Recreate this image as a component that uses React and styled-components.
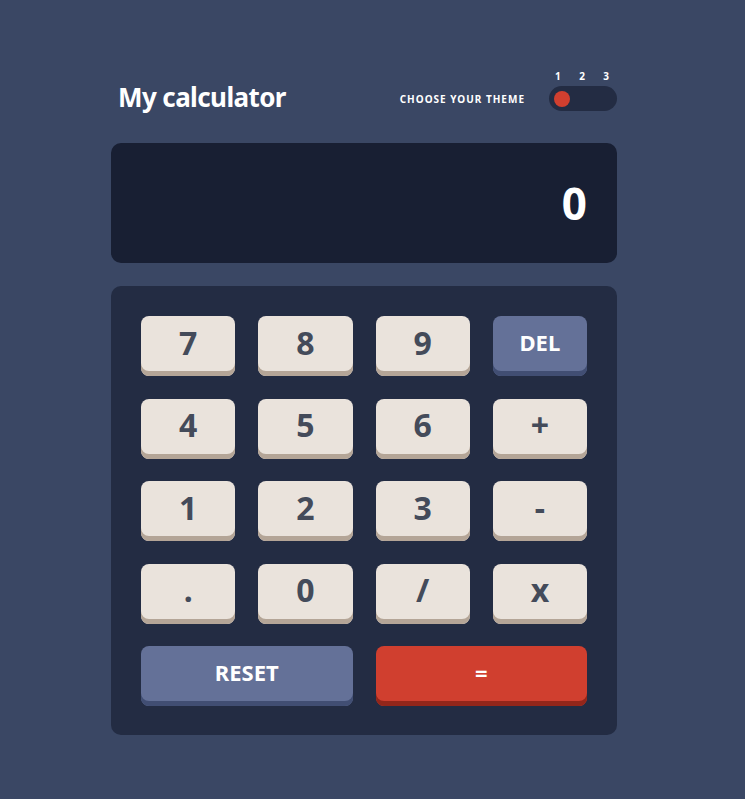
import styled, { createGlobalStyle } from "styled-components";

const GlobalStyle = createGlobalStyle`
  * { box-sizing: border-box; }
  html, body { margin: 0; padding: 0; }
  body {
    background: #3a4764;
    font-family: "Noto Sans", "Liberation Sans", sans-serif;
    min-height: 799px;
  }
`;

const Page = styled.div`
  display: flex;
  justify-content: center;
  padding: 70px 17px 0 0;
`;

const Calculator = styled.main`
  width: 506px;
  display: flex;
  flex-direction: column;
`;

const Header = styled.header`
  display: flex;
  align-items: flex-end;
  justify-content: space-between;
  height: 41px;
`;

const Title = styled.h1`
  margin: 0 0 0 7px;
  color: #fff;
  font-size: 26px;
  font-weight: 700;
  letter-spacing: -0.6px;
  line-height: 1;
  padding-bottom: 1px;
`;

const ThemeBox = styled.div`
  display: flex;
  align-items: flex-end;
  gap: 24px;
`;

const ThemeLabel = styled.span`
  color: #fff;
  font-size: 10px;
  font-weight: 700;
  letter-spacing: 1px;
  padding-bottom: 5px;
`;

const Switch = styled.div`
  display: flex;
  flex-direction: column;
  gap: 5px;
  width: 68px;
`;

const Numbers = styled.div`
  display: flex;
  justify-content: space-between;
  padding: 0 8px 0 6px;
  color: #fff;
  font-size: 10px;
  font-weight: 700;
  line-height: 1;
`;

const Track = styled.div`
  height: 25px;
  border-radius: 13px;
  background: #232c43;
  display: flex;
  align-items: center;
  padding: 0 5px;
`;

const Knob = styled.span`
  width: 16px;
  height: 16px;
  border-radius: 50%;
  background: #d03f2f;
`;

const Screen = styled.div`
  margin-top: 32px;
  height: 120px;
  border-radius: 10px;
  background: #181f33;
  display: flex;
  align-items: center;
  justify-content: flex-end;
  padding: 0 30px;
  color: #fff;
  font-size: 44px;
  font-weight: 700;
`;

const Keypad = styled.div`
  margin-top: 23px;
  border-radius: 10px;
  background: #232c43;
  padding: 30px 30px 29px;
  display: grid;
  grid-template-columns: repeat(4, 1fr);
  grid-auto-rows: 60px;
  gap: 22.5px 23px;
`;

const palette = {
  num: { bg: "#eae3dc", shadow: "#b4a597", color: "#444b5a", size: "32px" },
  del: { bg: "#647198", shadow: "#414e73", color: "#fff", size: "22px" },
  eq: { bg: "#d03f2f", shadow: "#93261a", color: "#fff", size: "22px" },
};

const Key = styled.button`
  border: none;
  border-radius: 8px;
  background: ${(p) => palette[p.$kind].bg};
  box-shadow: inset 0 -5px 0 ${(p) => palette[p.$kind].shadow};
  color: ${(p) => palette[p.$kind].color};
  font-family: inherit;
  font-size: ${(p) => palette[p.$kind].size};
  font-weight: 700;
  padding: 0 0 8px;
  grid-column: span ${(p) => p.$span || 1};
  cursor: pointer;
`;

const keys = ["7", "8", "9", "DEL", "4", "5", "6", "+", "1", "2", "3", "-", ".", "0", "/", "x"];

export default function App() {
  return (
    <>
      <GlobalStyle />
      <Page>
        <Calculator>
          <Header>
            <Title>My calculator</Title>
            <ThemeBox>
              <ThemeLabel>CHOOSE YOUR THEME</ThemeLabel>
              <Switch>
                <Numbers>
                  <span>1</span>
                  <span>2</span>
                  <span>3</span>
                </Numbers>
                <Track>
                  <Knob />
                </Track>
              </Switch>
            </ThemeBox>
          </Header>
          <Screen>0</Screen>
          <Keypad>
            {keys.map((k) => (
              <Key key={k} $kind={k === "DEL" ? "del" : "num"}>
                {k}
              </Key>
            ))}
            <Key $kind="del" $span={2}>RESET</Key>
            <Key $kind="eq" $span={2}>=</Key>
          </Keypad>
        </Calculator>
      </Page>
    </>
  );
}
